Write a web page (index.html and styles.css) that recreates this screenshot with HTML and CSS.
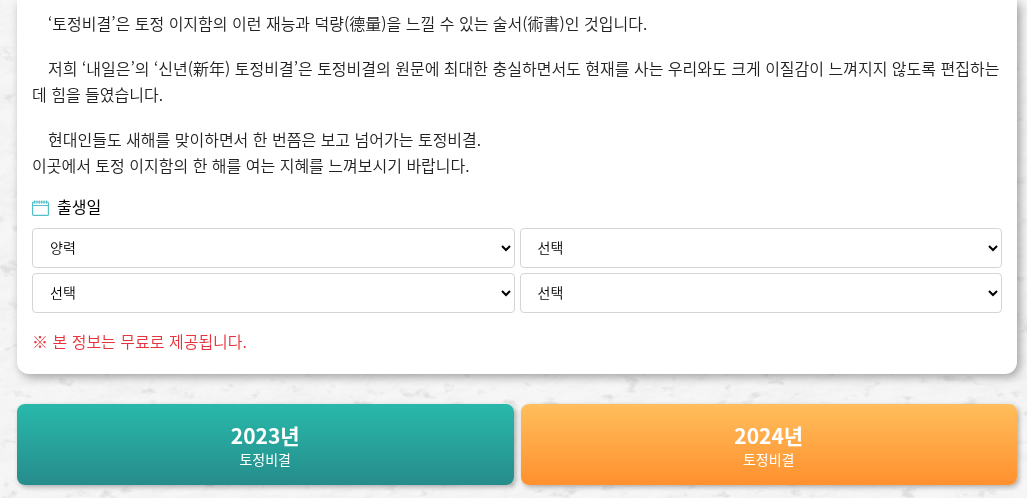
FILE: index.html
```html
<!DOCTYPE html>
<html lang="ko">
<head>
<meta charset="utf-8">
<meta name="viewport" content="width=device-width, initial-scale=1">
<title>토정비결</title>
<link rel="stylesheet" href="styles.css">
</head>
<body>
<svg class="wall" aria-hidden="true">
  <defs>
    <filter id="plaster" x="0" y="0" width="100%" height="100%">
      <feTurbulence type="fractalNoise" baseFrequency="0.02 0.025" numOctaves="6" seed="8"/>
      <feColorMatrix values="0 0 0 0 1  0 0 0 0 1  0 0 0 0 1  1 0 0 0 0"/>
      <feDiffuseLighting surfaceScale="4" diffuseConstant="1.15" lighting-color="#f6f6f6">
        <feDistantLight azimuth="240" elevation="60"/>
      </feDiffuseLighting>
    </filter>
    <filter id="cracks" x="0" y="0" width="100%" height="100%">
      <feTurbulence type="fractalNoise" baseFrequency="0.05 0.08" numOctaves="5" seed="21"/>
      <feColorMatrix values="0 0 0 0 0.5  0 0 0 0 0.5  0 0 0 0 0.5  5 0 0 0 -3.2"/>
    </filter>
  </defs>
  <rect width="100%" height="100%" filter="url(#plaster)" opacity="0.2"/>
  <rect width="100%" height="100%" filter="url(#cracks)" opacity="0.35"/>
</svg>
<main class="page">
  <form class="content">
    <section class="card">
      <p class="text">&emsp;‘토정비결’은 토정 이지함의 이런 재능과 덕량(德量)을 느낄 수 있는 술서(術書)인 것입니다.</p>
      <p class="text">&emsp;저희 ‘내일은’의 ‘신년(新年) 토정비결’은 토정비결의 원문에 최대한 충실하면서도 현재를 사는 우리와도 크게 이질감이 느껴지지 않도록 편집하는데 힘을 들였습니다.</p>
      <p class="text">&emsp;현대인들도 새해를 맞이하면서 한 번쯤은 보고 넘어가는 토정비결.<br>이곳에서 토정 이지함의 한 해를 여는 지혜를 느껴보시기 바랍니다.</p>
      <fieldset class="birth">
        <legend class="birth-title">
          <svg class="calendar" viewBox="0 0 17 16" aria-hidden="true">
            <rect x="0.6" y="2" width="15.8" height="13.4" rx="1" fill="#fff" stroke="#54bfc6" stroke-width="1.2"/>
            <path d="M1 5.5h15" stroke="#54bfc6"/>
            <path d="M2.5 .5v3.2M4.9 .5v3.2M7.3 .5v3.2M9.7 .5v3.2M12.1 .5v3.2M14.5 .5v3.2" stroke="#54bfc6" stroke-width="1.1"/>
          </svg>
          <span>출생일</span>
        </legend>
        <div class="fields">
          <select class="field" aria-label="양력 음력"><option>양력</option><option>음력</option></select>
          <select class="field" aria-label="년"><option>선택</option></select>
          <select class="field" aria-label="월"><option>선택</option></select>
          <select class="field" aria-label="일"><option>선택</option></select>
        </div>
      </fieldset>
      <p class="notice">※ 본 정보는 무료로 제공됩니다.</p>
    </section>
    <div class="actions">
      <button class="action action-teal" type="button"><strong class="year">2023년</strong><span class="label">토정비결</span></button>
      <button class="action action-orange" type="button"><strong class="year">2024년</strong><span class="label">토정비결</span></button>
    </div>
  </form>
</main>
</body>
</html>
```
FILE: styles.css
```css
* {
  box-sizing: border-box;
}

body {
  margin: 0;
  background: #f4f4f4;
  color: #222;
  font: 350 16px/26px "Noto Sans CJK KR", sans-serif;
}

.wall {
  position: fixed;
  inset: 0;
  z-index: -1;
  width: 100%;
  height: 100%;
}

.page {
  padding: 0 10px 13px 17px;
}

.content {
  display: flex;
  flex-direction: column;
  gap: 30px;
}

.card {
  padding: 10px 15px 20px;
  border-radius: 0 0 12px 12px;
  background: #fff;
  box-shadow: 3px 3px 10px rgba(0, 0, 0, 0.35);
}

.text {
  margin: 0 0 19px;
  word-break: break-all;
}

.birth {
  min-width: 0;
  margin: -4px 0 0;
  padding: 0;
  border: 0;
}

.birth-title {
  display: flex;
  align-items: center;
  gap: 8px;
  margin-bottom: 9px;
  padding: 0;
  color: #000;
  font-weight: 400;
}

.calendar {
  width: 17px;
  height: 16px;
  margin-top: 4px;
}

.fields {
  display: grid;
  grid-template-columns: 1fr 1fr;
  gap: 5px;
}

.field {
  height: 40px;
  padding: 0 3px 3px 13px;
  border: 1px solid #d5d5d5;
  border-radius: 4px;
  background: #fff;
  color: #000;
  font: 350 14px "Noto Sans CJK KR", sans-serif;
}

.notice {
  margin: 15px 0 0;
  color: #e8323c;
}

.actions {
  display: grid;
  grid-template-columns: 1fr 1fr;
  gap: 7px;
}

.action {
  display: flex;
  flex-direction: column;
  align-items: center;
  padding: 17px 0 16px;
  border: 0;
  border-radius: 8px;
  color: #fff;
  font-family: "Noto Sans CJK KR", sans-serif;
  box-shadow: 2px 2px 5px rgba(0, 0, 0, 0.3);
}

.action-teal {
  background: linear-gradient(#28b9aa, #268c8c);
}

.action-orange {
  background: linear-gradient(#ffbe5c, #ff902e);
}

.year {
  font-size: 21px;
  font-weight: 700;
  line-height: 28px;
}

.label {
  font-size: 14px;
  font-weight: 400;
  line-height: 20px;
}
```
